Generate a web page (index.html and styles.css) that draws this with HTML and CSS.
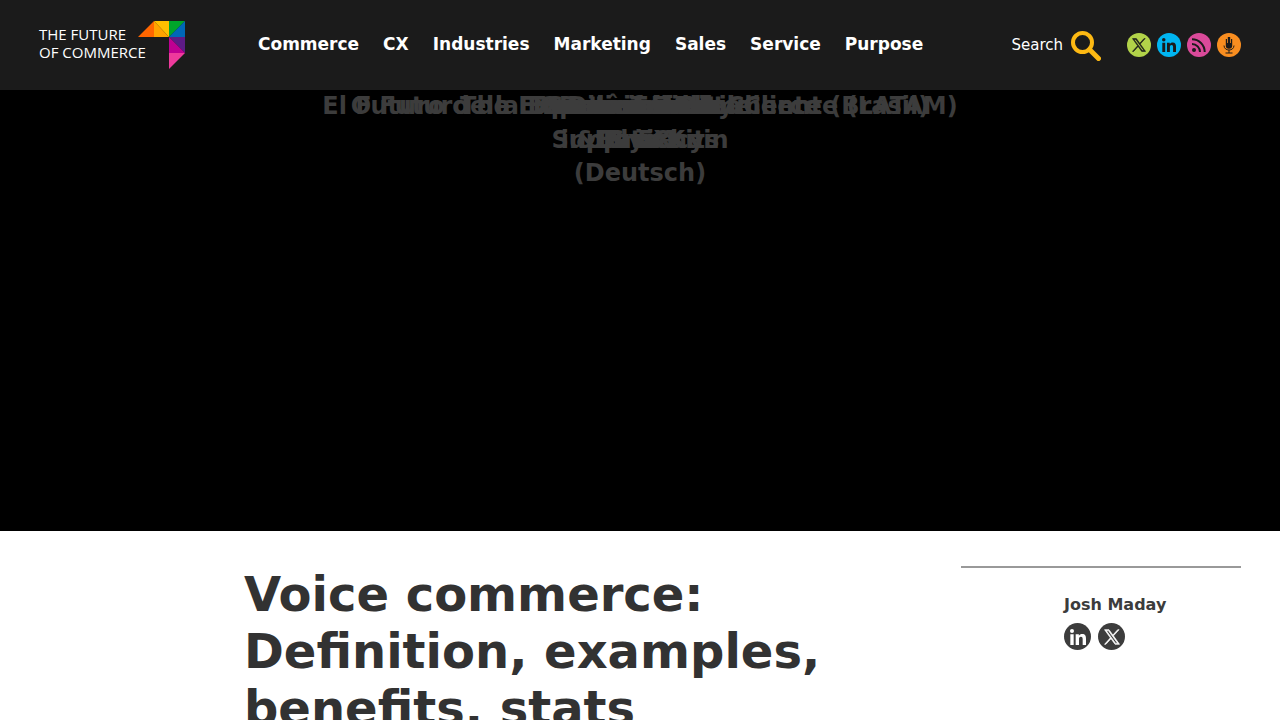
FILE: index.html
```html
<!DOCTYPE html>
<html lang="en">
<head>
    <meta charset="UTF-8">
    <meta name="viewport" content="width=device-width, initial-scale=1.0">
    <title>Voice commerce: Definition, examples, benefits, stats</title>
    <link rel="stylesheet" href="styles.css">
</head>
<body>
    <svg class="sprite" aria-hidden="true">
        <symbol id="icon-x" viewBox="0 0 24 24">
            <path fill-rule="evenodd" d="M14.2 10.3 22.6 1h-2l-7.3 8.1L7.5 1H.8l8.8 12.3L.8 23h2l7.7-8.5 6.1 8.5h6.7zM3.5 2.400h3l14 19.200h-3z"/>
        </symbol>
        <symbol id="icon-in" viewBox="0 0 24 24">
            <circle cx="3" cy="3" r="3"/>
            <path d="M.5 8h5v16h-5zM8.5 8h4.800v2.200C14.300 8.600 16 7.600 18.300 7.600c4.500 0 5.700 3 5.700 7V24h-5v-8.400c0-2-.3-3.800-2.600-3.800-2.400 0-2.900 1.800-2.900 3.700V24h-5z"/>
        </symbol>
    </svg>

    <header class="site-header">
        <a class="logo" href="#" aria-label="The Future of Commerce">
            <span class="logo-text">THE FUTURE<br>OF COMMERCE</span>
            <svg class="logo-mark" viewBox="0 0 47 48" aria-hidden="true">
                <path fill="#ff6600" d="M0 16 16 0v16z"/>
                <path fill="#ffc000" d="M16 0h15v16z"/>
                <path fill="#ffa300" d="M16 0v16h15z"/>
                <path fill="#00a52b" d="M31 16V0h16z"/>
                <path fill="#0067b8" d="M47 0v16H31z"/>
                <path fill="#5d1b86" d="M31 16h16v16z"/>
                <path fill="#bf0092" d="M31 16v16h16z"/>
                <path fill="#ee3a9c" d="M31 32h16L31 48z"/>
            </svg>
        </a>
        <nav class="main-nav">
            <a href="#">Commerce</a>
            <a href="#">CX</a>
            <a href="#">Industries</a>
            <a href="#">Marketing</a>
            <a href="#">Sales</a>
            <a href="#">Service</a>
            <a href="#">Purpose</a>
        </nav>
        <button class="search" type="button">
            Search
            <svg viewBox="0 0 30 30" aria-hidden="true">
                <circle cx="11.500" cy="11.500" r="9.500"/>
                <path d="m18.500 18.500 9 9"/>
            </svg>
        </button>
        <div class="social">
            <a class="social-x" href="#" aria-label="X"><svg><use href="#icon-x"/></svg></a>
            <a class="social-in" href="#" aria-label="LinkedIn"><svg><use href="#icon-in"/></svg></a>
            <a class="social-rss" href="#" aria-label="RSS">
                <svg viewBox="0 0 14 14">
                    <circle cx="2" cy="12" r="2"/>
                    <path class="line" d="M0 6a8 8 0 0 1 8 8M0 1.300A12.700 12.700 0 0 1 12.700 14"/>
                </svg>
            </a>
            <a class="social-mic" href="#" aria-label="Podcast">
                <svg viewBox="0 0 12 18">
                    <path d="M2.800 3h1.200v4h.8V1h2.400v6h.8V3h1.200v6.500a3.200 3.200 0 0 1-6.400 0z"/>
                    <path class="line" d="M1 9.500c0 6 10 6 10 0M6 14v3M2.500 17h7"/>
                </svg>
            </a>
        </div>
    </header>

    <section class="hero">
        <a href="#">El Futuro de la Experiencia del Cliente (LATAM)</a>
        <a href="#">O Futuro da Experiência do Cliente (Brasil)</a>
        <a href="#">The Future of E-Commerce</a>
        <a href="#">Customer Data<br>&amp; Privacy</a>
        <a href="#">Trends in Mobile<br>&amp; EX</a>
        <a href="#">Sustainability<br>in Data Kits</a>
        <a href="#">Diversified<br>Supply Chain</a>
        <a href="#">Data Trends<br>Basics<br>(Deutsch)</a>
    </section>

    <main class="article">
        <h1>Voice commerce: Definition, examples, benefits, stats</h1>
        <aside class="author">
            <div class="author-info">
                <a class="author-name" href="#">Josh Maday</a>
                <div class="author-links">
                    <a href="#" aria-label="LinkedIn"><svg><use href="#icon-in"/></svg></a>
                    <a href="#" aria-label="X"><svg class="bold"><use href="#icon-x"/></svg></a>
                </div>
            </div>
        </aside>
    </main>
</body>
</html>
```
FILE: styles.css
```css
* { box-sizing: border-box; }
body { margin: 0; font-family: "DejaVu Sans", sans-serif; color: #3c3c3c; background: #fff; }
a { color: inherit; text-decoration: none; }
svg { display: block; }
.sprite { display: none; }

.site-header { display: flex; align-items: center; height: 90px; padding: 0 39px; background: #1b1b1b; color: #fff; }
.logo { display: flex; width: 219px; height: 48px; }
.logo-text { width: 99px; padding-top: 4px; font: 15px/18px "Open Sans", sans-serif; white-space: nowrap; }
.logo-mark { width: 47px; height: 48px; }
.main-nav { display: flex; gap: 24px; padding-bottom: 2px; font-size: 17px; font-weight: bold; }
.search { display: flex; align-items: center; gap: 8px; margin-left: auto; padding: 0; border: 0; background: none; color: #fff; font: 15px "DejaVu Sans", sans-serif; cursor: pointer; }
.search svg { width: 30px; height: 30px; margin-top: 2px; fill: none; stroke: #fdb913; stroke-width: 4; }
.search path { stroke-width: 5; stroke-linecap: round; }

.social { display: flex; gap: 6px; margin-left: 26px; }
.social a { display: flex; align-items: center; justify-content: center; width: 24px; height: 24px; border-radius: 50%; }
.social svg { width: 14px; height: 14px; fill: #1b1b1b; }
.social .line { fill: none; stroke: #1b1b1b; stroke-width: 2; }
.social-x { background: #b2d349; }
.social-x svg { stroke: #1b1b1b; }
.social-in { background: #00b5f1; }
.social-rss { background: #da4a9a; }
.social-mic { background: #f98e20; }
.social .social-mic svg { width: 12px; height: 18px; }
.social .social-mic .line { stroke-width: 1; }

/* slides share one grid cell */
.hero { display: grid; align-items: start; min-height: 441px; background: #000; color: #3c3c3c; font-size: 24px; font-weight: bold; line-height: 1.4; text-align: center; }
.hero a { grid-area: 1 / 1; }

.article { display: flex; justify-content: space-between; padding: 35px 39px 40px 244px; }
h1 { width: 600px; margin: 0; font-size: 48px; line-height: 57px; color: #323232; }
.author { width: 280px; border-top: 2px solid #999; padding-top: 27px; }
.author-info { margin-left: 103px; }
.author-name { font-size: 16px; font-weight: bold; line-height: 20px; }
.author-links { display: flex; gap: 7px; margin-top: 8px; }
.author-links a { display: flex; align-items: center; justify-content: center; width: 27px; height: 27px; border-radius: 50%; background: #3c3c3c; }
.author-links svg { width: 16px; height: 16px; fill: #fff; }
.author-links .bold { stroke: #fff; }
```
